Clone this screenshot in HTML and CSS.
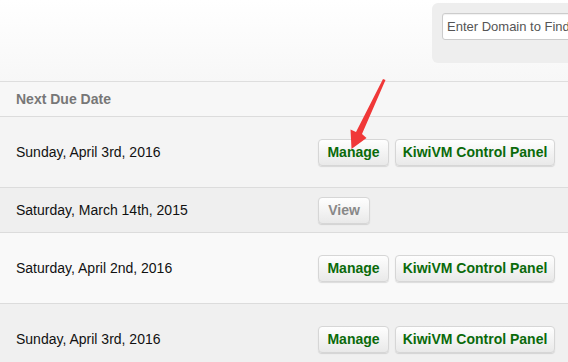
FILE: index.html
```html
<!DOCTYPE html>
<html>
<head>
<meta charset="utf-8">
<link rel="stylesheet" href="styles.css">
</head>
<body>
<div class="page">
  <div class="top">
    <div class="search-panel">
      <input class="search-input" type="text" placeholder="Enter Domain to Find">
    </div>
  </div>
  <div class="row head">
    <div class="col-date">Next Due Date</div>
    <div class="col-actions"></div>
  </div>
  <div class="row tall r1">
    <div class="col-date">Sunday, April 3rd, 2016</div>
    <div class="col-actions"><a class="btn btn-manage">Manage</a><a class="btn btn-panel">KiwiVM Control Panel</a></div>
  </div>
  <div class="row short r2">
    <div class="col-date">Saturday, March 14th, 2015</div>
    <div class="col-actions"><a class="btn btn-grey">View</a></div>
  </div>
  <div class="row tall r3">
    <div class="col-date">Saturday, April 2nd, 2016</div>
    <div class="col-actions"><a class="btn btn-manage">Manage</a><a class="btn btn-panel">KiwiVM Control Panel</a></div>
  </div>
  <div class="row tall r4">
    <div class="col-date">Sunday, April 3rd, 2016</div>
    <div class="col-actions"><a class="btn btn-manage">Manage</a><a class="btn btn-panel">KiwiVM Control Panel</a></div>
  </div>
  <svg class="arrow" width="568" height="362" viewBox="0 0 568 362">
    <polygon points="383,79 385.5,80 362,134 366.5,138 351.5,149 350.5,129.5 356,132" fill="#f03838"/>
  </svg>
</div>
</body>
</html>
```
FILE: styles.css
```css
html, body {
  margin: 0;
  padding: 0;
}
body {
  width: 568px;
  height: 362px;
  overflow: hidden;
  background: #f0f0f0;
  font-family: "Liberation Sans", Arial, sans-serif;
  font-size: 14px;
  color: #111;
}
.page {
  position: relative;
}
.top {
  height: 81px;
  border-bottom: 1px solid #dedede;
  background: linear-gradient(#ffffff, #f7f7f7);
  display: flex;
  justify-content: flex-end;
  align-items: flex-start;
  overflow: hidden;
}
.search-panel {
  margin-top: 3px;
  margin-right: -20px;
  width: 136px;
  height: 40px;
  padding: 10px;
  background: #eeeeee;
  border-radius: 6px;
}
.search-input {
  display: block;
  box-sizing: border-box;
  width: 160px;
  height: 27px;
  margin: 0;
  padding: 0 4px;
  border: 1px solid #cccccc;
  border-radius: 3px;
  background: #fff;
  font-family: "Liberation Sans", Arial, sans-serif;
  font-size: 13px;
  color: #555;
  box-shadow: inset 0 1px 1px rgba(0,0,0,0.06);
}
.search-input::placeholder {
  color: #555;
  opacity: 1;
}
.row {
  display: flex;
  align-items: center;
  border-bottom: 1px solid #dcdcdc;
}
.col-date {
  width: 302px;
  padding-left: 16px;
}
.col-actions {
  display: flex;
  gap: 6px;
}
.head {
  height: 34px;
  background: #f7f7f7;
}
.head .col-date {
  font-weight: bold;
  color: #777;
}
.tall { height: 70px; }
.short { height: 44px; }
.r1 { background: #f4f4f4; }
.r2 { background: #efefef; }
.r3 { background: #f9f9f9; }
.r4 { background: #f0f0f0; border-bottom: none; }
.btn {
  display: inline-flex;
  align-items: center;
  justify-content: center;
  box-sizing: border-box;
  height: 27px;
  padding: 0;
  border: 1px solid #d6d6d6;
  border-radius: 4px;
  background: linear-gradient(#fefefe, #e9e9e9);
  box-shadow: 0 1px 1px rgba(0,0,0,0.12);
  font-weight: bold;
  font-size: 14px;
  color: #0a6a0a;
  text-decoration: none;
  white-space: nowrap;
}
.btn-manage { width: 71px; }
.btn-panel { width: 160px; }
.btn-grey {
  color: #888;
  width: 52px;
}
.arrow {
  position: absolute;
  left: 0;
  top: 0;
  pointer-events: none;
}
```
